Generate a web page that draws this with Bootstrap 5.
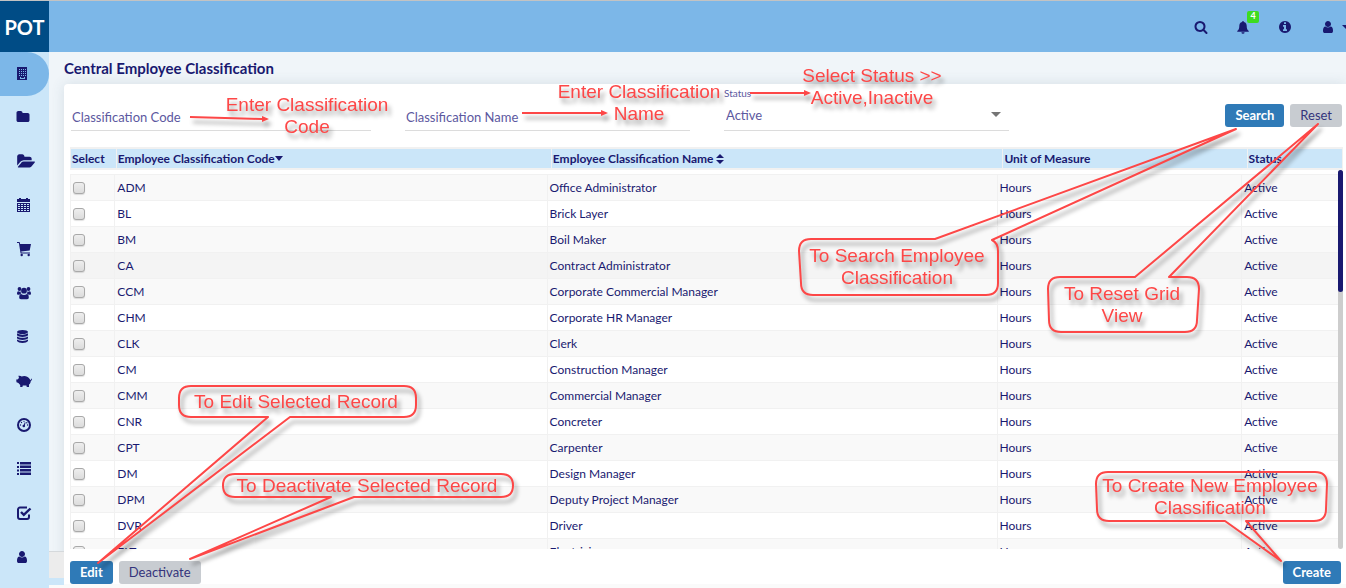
<!DOCTYPE html>
<html lang="en">
<head>
<meta charset="utf-8">
<meta name="viewport" content="width=device-width, initial-scale=1">
<title>Central Employee Classification</title>
<link href="https://cdn.jsdelivr.net/npm/bootstrap@5.3.0/dist/css/bootstrap.min.css" rel="stylesheet">
<style>
  :root { --ink: #191970; --sky: #7cb7e8; --pale: #cbe6f9; --grid: #f1f1f1; --note: #fd4747; }
  body { font-family: Lato, "Liberation Sans", sans-serif; font-size: 12px; line-height: 16px; color: var(--ink); background: #f0f5f9; }
  .app { height: 100vh; }
  .topbar { background: var(--sky); border-top: 1px solid #c3c3c3; height: 52px; }
  .brand { width: 49px; background: #004c86; color: #fff; font-size: 20px; font-weight: 700; }
  .tools { gap: 29px; }
  .tools a, .rail a { color: var(--ink); }
  .tools svg, .rail svg { display: block; fill: currentColor; }
  .tools .caret { margin-left: 7px; }
  .alerts { top: -9px; left: 10px; width: 12px; height: 12px; line-height: 10px; font-size: 9px; font-weight: 700; background: #3ddc20; color: #fff; border-radius: 2px; }
  .rail { width: 49px; background: var(--pale); }
  .rail a { height: 44px; padding: 0 0 2px 16px; }
  .rail a.active { background: var(--sky); border-radius: 0 22px 22px 0; padding-bottom: 0; }
  .page-foot { width: 15px; height: 37px; border-top: 1px solid #d5d9dc; background: linear-gradient(#ececec 26px, var(--pale) 26px 33px, #fafafa 33px); }
  .page-title { font-size: 15px; line-height: 32px; font-weight: 700; padding-left: 15px; }
  .panel { background: #fff; border-radius: 4px 0 0 0; box-shadow: 0 0 14px rgba(60, 90, 110, .14); padding: 3px 3px 0 6px; margin-left: 15px; }
  .base-strip { height: 4px; background: #fafafa; margin-left: 15px; }
  .filters { display: grid; grid-template-columns: 300fr 285fr 285fr 299fr; column-gap: 34px; padding: 0 1px; }
  .filters .form-control, .filters .form-select { border: 0; border-bottom: 1px solid #dcdcdc; border-radius: 0; padding: 0 1px; height: 27px; font-size: 13px; color: #5c58a0; background-color: transparent; box-shadow: none; }
  .filters .form-control::placeholder { color: #5c58a0; opacity: 1; }
  .filters .form-select { height: 32px; padding: 2px 24px 0 2px; background-image: url("data:image/svg+xml,%3Csvg xmlns='http://www.w3.org/2000/svg' viewBox='0 0 10 5'%3E%3Cpath fill='%23757575' d='M0 0h10L5 5z'/%3E%3C/svg%3E"); background-size: 10px 5px; background-position: right 8px center; }
  .filters label { font-size: 10px; line-height: 12px; color: #5c58a0; }
  .btn { font-size: 13px; line-height: 23px; padding: 0 10px; border: 0; border-radius: 3px; }
  .btn-primary { background: #2f7ab7; font-weight: 700; }
  .btn-secondary, .btn-secondary:hover { background: #c8ccd1; color: #34347c; }
  .actions { column-gap: 6px; padding-right: 2px; }
  .grid { table-layout: fixed; width: 100%; margin: 0; }
  .grid th { background: var(--pale); height: 21px; line-height: 15px; padding: 0 1px; border: solid var(--grid); border-width: 2px 1px; font-weight: 700; white-space: nowrap; }
  .grid td { height: 26px; padding: 0 2px; border: solid var(--grid); border-width: 1px 0 0 1px; white-space: nowrap; }
  .grid tbody tr:nth-child(odd) { background: #f9f9f9; }
  .grid tbody tr.current { background: #f4f4f4; }
  .grid svg { fill: var(--ink); vertical-align: -1px; }
  .rows { padding-top: 4px; }
  .grid .form-check-input { display: block; width: 12px; height: 12px; margin: 0; border: 1px solid #a9a9a9; border-radius: 3px; background-color: #dedede; background-image: linear-gradient(#eee, #dcdcdc); box-shadow: 0 1px 1px rgba(0, 0, 0, .12); }
  .track { width: 5px; background: #cdcdcd; border-radius: 3px; }
  .thumb { height: 122px; background: var(--ink); border-radius: 3px; }
  .note { position: absolute; pointer-events: none; z-index: 5; overflow: visible; filter: drop-shadow(3px 5px 2px rgba(0, 0, 0, .38)); font: 19px "Liberation Sans", Arial, sans-serif; }
  .note text { fill: var(--note); text-anchor: middle; }
  .note path { fill: none; stroke: var(--note); stroke-width: 2; stroke-linejoin: round; }
  .note .tip { fill: var(--note); stroke: none; }
</style>
</head>
<body>
<div class="app d-flex flex-column overflow-hidden">
  <header class="topbar d-flex flex-shrink-0">
    <div class="brand d-flex align-items-center justify-content-center">POT</div>
    <nav class="tools d-flex align-items-center ms-auto" aria-label="Account">
      <a href="#" aria-label="Search"><svg width="14" height="14" viewBox="0 0 1792 1792"><path d="M1216 832q0-185-131.500-316.500t-316.500-131.500-316.500 131.500-131.500 316.500 131.500 316.500 316.500 131.500 316.500-131.500 131.500-316.500zm512 832q0 52-38 90t-90 38q-54 0-90-38l-343-342q-179 124-399 124-143 0-273.500-55.500t-225-150-150-225-55.500-273.500 55.500-273.500 150-225 225-150 273.500-55.500 273.500 55.500 225 150 150 225 55.500 273.500q0 220-124 399l343 343q37 37 37 90z"/></svg></a>
      <a href="#" class="position-relative" aria-label="Alerts"><svg width="12" height="14" viewBox="0 0 12 14"><path d="M6 1c.6 0 .9.300.9.900C9 2.400 9.700 4 9.700 6c0 2.700.8 4 2.100 5 .3.400 0 .8-.4.800H.6c-.4 0-.7-.4-.4-.8C1.500 10 2.300 8.700 2.300 6c0-2 .7-3.600 2.800-4.100C5.100 1.300 5.400 1 6 1zM4.400 12.200h3.200a1.600 1.600 0 0 1-3.200 0z"/></svg><span class="alerts position-absolute text-center">4</span></a>
      <a href="#" aria-label="Information"><svg width="14" height="14" viewBox="0 0 1792 1792"><path d="M1152 1376v-160q0-14-9-23t-23-9h-96v-512q0-14-9-23t-23-9h-320q-14 0-23 9t-9 23v160q0 14 9 23t23 9h96v320h-96q-14 0-23 9t-9 23v160q0 14 9 23t23 9h448q14 0 23-9t9-23zm-128-896v-160q0-14-9-23t-23-9h-192q-14 0-23 9t-9 23v160q0 14 9 23t23 9h192q14 0 23-9t9-23zm640 416q0 209-103 385.500t-279.500 279.500-385.500 103-385.500-103-279.500-279.500-103-385.500 103-385.500 279.500-279.500 385.500-103 385.500 103 279.500 279.500 103 385.500z"/></svg></a>
      <a href="#" class="d-flex align-items-center" aria-label="Profile"><svg width="14" height="14" viewBox="0 0 1792 1792"><path d="M1536 1399q0 109-62.500 187t-150.500 78h-854q-88 0-150.500-78t-62.500-187q0-85 8.500-160.500t31.500-152 58.500-131 94-89 134.500-34.500q131 128 313 128t313-128q76 0 134.500 34.500t94 89 58.500 131 31.500 152 8.500 160.500zm-256-887q0 159-112.500 271.500t-271.500 112.500-271.500-112.500-112.500-271.500 112.500-271.500 271.500-112.500 271.500 112.500 112.500 271.500z"/></svg><svg class="caret" width="4" height="4" viewBox="0 0 4 4"><path d="M0 0h4v4z"/></svg></a>
    </nav>
  </header>

  <div class="d-flex flex-grow-1" style="min-height:0">
    <nav class="rail flex-shrink-0 nav flex-column flex-nowrap overflow-hidden" aria-label="Main">
      <a href="#" class="active d-flex align-items-center" aria-label="Company"><svg width="16" height="16" viewBox="0 0 16 16"><path fill-rule="evenodd" d="M1 1h10v13H1zM3 3v1h1V3zm2 0v1h1V3zm2 0v1h1V3zm2 0v1h1V3zM3 5v1h1V5zm2 0v1h1V5zm2 0v1h1V5zm2 0v1h1V5zM3 7v1h1V7zm2 0v1h1V7zm2 0v1h1V7zm2 0v1h1V7zM3 9v1h1V9zm2 0v1h1V9zm2 0v1h1V9zm2 0v1h1V9zM4 11h1v1h3v-1h1v2H4z"/></svg></a>
      <a href="#" class="d-flex align-items-center" aria-label="Projects"><svg width="14" height="14" viewBox="0 0 1792 1792"><path d="M1728 608v704q0 92-66 158t-158 66h-1216q-92 0-158-66t-66-158v-960q0-92 66-158t158-66h320q92 0 158 66t66 158v32h672q92 0 158 66t66 158z"/></svg></a>
      <a href="#" class="d-flex align-items-center" aria-label="Documents"><svg width="19" height="17" viewBox="-60 0 2016 1792"><path d="M1943 952q0 31-31 66l-336 396q-43 51-120.500 86.500t-143.500 35.500h-1088q-34 0-60.500-13t-26.500-43q0-31 31-66l336-396q43-51 120.500-86.500t143.500-35.500h1088q34 0 60.500 13t26.500 43zm-343-344v160h-832q-94 0-197 47.500t-164 119.500l-337 396-5 6q0-4-.5-12.500t-.5-12.500v-960q0-92 66-158t158-66h320q92 0 158 66t66 158v32h544q92 0 158 66t66 158z"/></svg></a>
      <a href="#" class="d-flex align-items-center" aria-label="Calendar"><svg width="16" height="16" viewBox="0 0 16 16"><path fill-rule="evenodd" d="M3 1h2v1h5V1h2v1h2v3H1V2h2zM1 6h13v9H1zM2 7v1h2V7zm3 0v1h2V7zm3 0v1h2V7zm3 0v1h2V7zM2 9v1h2V9zm3 0v1h2V9zm3 0v1h2V9zm3 0v1h2V9zM2 11v1h2v-1zm3 0v1h2v-1zm3 0v1h2v-1zm3 0v1h2v-1zM2 13v1h2v-1zm3 0v1h2v-1zm3 0v1h2v-1zm3 0v1h2v-1z"/></svg></a>
      <a href="#" class="d-flex align-items-center" aria-label="Purchasing"><svg width="16" height="16" viewBox="0 0 16 16"><path d="M1 1h2.600l.5 2H15l-1.300 6.500-8.500.9.300 1.100H14v1H4.600L2.900 2H1z"/><circle cx="5.700" cy="14" r="1.200"/><circle cx="12.700" cy="14" r="1.200"/></svg></a>
      <a href="#" class="d-flex align-items-center" aria-label="Employees"><svg width="16" height="16" viewBox="0 0 16 16"><circle cx="3.500" cy="4" r="1.900"/><circle cx="12.500" cy="4" r="1.900"/><circle cx="8" cy="5.700" r="2.900"/><path d="M1 9c0-1.600.4-2.800 1.300-2.800.6.400 1.400.6 2.300.3 0 1 .2 1.600.8 2.300-1 0-1.500.3-2 .9C2 9.700 1 9.800 1 9zM15 9c0-1.600-.4-2.800-1.300-2.800-.6.400-1.400.6-2.300.3 0 1-.2 1.600-.8 2.300 1 0 1.500.3 2 .9 1.400 0 2.400.1 2.400-.7zM3.200 12.500c0-2 .5-3.600 1.900-3.600 1.800 1.400 4 1.400 5.800 0 1.400 0 1.900 1.600 1.900 3.600 0 1-.7 1.700-1.700 1.700H4.900c-1 0-1.700-.7-1.700-1.700z"/></svg></a>
      <a href="#" class="d-flex align-items-center" aria-label="Data"><svg width="16" height="16" viewBox="0 0 16 16"><ellipse cx="6.500" cy="3" rx="5.500" ry="2"/><path d="M1 4.300c2 1.800 9 1.800 11 0v1.900C10.500 8.500 2.500 8.500 1 6.200zM1 7.500c2 1.800 9 1.800 11 0v1.700c-1.500 2.300-9.500 2.300-11 0zM1 10.600c2 1.800 9 1.800 11 0V12c-1.500 2.500-9.500 2.500-11 0z"/></svg></a>
      <a href="#" class="d-flex align-items-center" aria-label="Finance"><svg width="17" height="16" viewBox="0 0 17 16"><path d="M.2 6.500h1.300L3 5 2.400 2.800C4 2.500 5 3 5.600 3.600 8 2.400 11.800 3 13.300 5.600c.6.900.9 1.300 1.300 1.300.5 0 .6-.4.4-1l.6-.3c.6 1 .4 2-.8 2.200 0 2-.8 3-1.800 3.800v2.300h-2.200l-.4-1.300H6.800l-.4 1.300H4.200v-2L2.400 10l-1.900-.7z"/></svg></a>
      <a href="#" class="d-flex align-items-center" aria-label="Dashboard"><svg width="16" height="16" viewBox="0 0 16 16"><circle cx="8" cy="8" r="6" fill="none" stroke="currentColor" stroke-width="2"/><circle cx="7.800" cy="9" r="1.300"/><path d="M7.500 8.500l1.300-3.300.8.300-1 3.400z"/><circle cx="4.500" cy="8" r=".7"/><circle cx="5.500" cy="5.500" r=".7"/><circle cx="8" cy="4.300" r=".6"/><circle cx="10.800" cy="5.700" r=".7"/><circle cx="11.600" cy="8" r=".7"/></svg></a>
      <a href="#" class="d-flex align-items-center" aria-label="Lists"><svg width="16" height="16" viewBox="0 0 16 16"><path d="M1 1h2v2H1zm3 0h11v2.500H4zM1 5h2v2H1zm3-.5h11V7H4zM1 8.500h2v2H1zM4 8h11v2.500H4zm-3 4h2v2H1zm3-.5h11V14H4z"/></svg></a>
      <a href="#" class="d-flex align-items-center" aria-label="Tasks"><svg width="16" height="16" viewBox="0 0 16 16"><path d="M11 2.500H4a2 2 0 0 0-2 2V12a2 2 0 0 0 2 2h7a2 2 0 0 0 2-2V9.500" fill="none" stroke="currentColor" stroke-width="2"/><path d="M5 7l2.800 2.800L14.500 3.500" fill="none" stroke="currentColor" stroke-width="2.400"/></svg></a>
      <a href="#" class="d-flex align-items-center" aria-label="Users"><svg width="14" height="14" viewBox="128 0 1792 1792"><path d="M1536 1399q0 109-62.500 187t-150.500 78h-854q-88 0-150.500-78t-62.500-187q0-85 8.500-160.500t31.500-152 58.500-131 94-89 134.500-34.500q131 128 313 128t313-128q76 0 134.500 34.500t94 89 58.500 131 31.500 152 8.500 160.500zm-256-887q0 159-112.500 271.500t-271.500 112.500-271.500-112.500-112.500-271.500 112.500-271.500 271.500-112.500 271.500 112.500 112.500 271.500z"/></svg></a>
    </nav>

    <main class="d-flex flex-column flex-grow-1 position-relative" style="min-width:0">
      <div class="page-foot position-absolute bottom-0 start-0"></div>
      <h1 class="page-title mb-0">Central Employee Classification</h1>
      <section class="panel d-flex flex-column flex-grow-1" style="min-height:0">
        <form class="filters align-items-end mb-3">
          <div class="position-relative">
            <input class="form-control" id="code" type="text" placeholder="Classification Code" aria-label="Classification Code">
            <svg class="note top-0 start-0" width="320" height="50" viewBox="71 104 320 50"><path d="M190 117l72 2"/><path class="tip" d="M262 116l7 3-7 3z"/><text x="307" y="111">Enter Classification</text><text x="307" y="133">Code</text></svg>
          </div>
          <div class="position-relative">
            <input class="form-control" id="name" type="text" placeholder="Classification Name" aria-label="Classification Name">
            <svg class="note top-0 start-0" width="320" height="50" viewBox="405 104 320 50"><path d="M522 113h80"/><path class="tip" d="M601 110l7 3-7 3z"/><text x="639" y="98">Enter Classification</text><text x="639" y="120">Name</text></svg>
          </div>
          <div class="position-relative">
            <label class="d-block" for="status">Status</label>
            <select class="form-select" id="status"><option>Active</option><option>Inactive</option></select>
            <svg class="note top-0 start-0" width="240" height="50" viewBox="724 87 240 50"><path d="M750 93h55"/><path class="tip" d="M804 90l7 3-7 3z"/><text x="872" y="82">Select Status &gt;&gt;</text><text x="872" y="104">Active,Inactive</text></svg>
          </div>
          <div class="actions d-flex justify-content-end position-relative pb-1 pe-0">
            <button type="button" class="btn btn-primary">Search</button>
            <button type="reset" class="btn btn-secondary">Reset</button>
            <svg class="note top-0 end-0" width="546" height="240" viewBox="796 104 546 240"><path d="M811 239H935L1236 129 992 240Q998 243 998 251V283Q998 295 986 295H813Q801 295 801 283L799 251Q799 239 811 239z"/><text x="897" y="262">To Search Employee</text><text x="897" y="284">Classification</text><path d="M1060 277H1135L1318 124 1169 277H1187Q1199 277 1199 289L1197 320Q1197 332 1185 332H1061Q1049 332 1049 320L1048 289Q1048 277 1060 277z"/><text x="1122" y="300">To Reset Grid</text><text x="1122" y="322">View</text></svg>
          </div>
        </form>

        <table class="grid">
          <colgroup><col style="width:3.600%"><col style="width:34.200%"><col style="width:35.500%"><col style="width:19.200%"><col style="width:7.500%"></colgroup>
          <thead><tr>
            <th scope="col">Select</th>
            <th scope="col">Employee Classification Code<svg width="8" height="9" viewBox="0 0 8 9"><path d="M0 1h8L4 6z"/></svg></th>
            <th scope="col">Employee Classification Name <svg width="8" height="10" viewBox="0 0 8 10"><path d="M0 4h8L4 0zM0 6h8l-4 4z"/></svg></th>
            <th scope="col">Unit of Measure</th>
            <th scope="col">Status</th>
          </tr></thead>
        </table>
        <div class="d-flex flex-grow-1 overflow-hidden" style="flex-basis:0">
          <div class="rows flex-grow-1 overflow-hidden">
            <table class="grid">
              <colgroup><col style="width:3.500%"><col style="width:34.100%"><col style="width:35.500%"><col style="width:19.300%"><col style="width:7.600%"></colgroup>
              <tbody id="records"></tbody>
            </table>
          </div>
          <div class="track flex-shrink-0"><div class="thumb"></div></div>
        </div>
        <div class="actions d-flex position-relative flex-shrink-0 mt-2 pt-1">
          <button type="button" class="btn btn-primary">Edit</button>
          <button type="button" class="btn btn-secondary">Deactivate</button>
          <button type="button" class="btn btn-primary ms-auto">Create</button>
          <svg class="note bottom-0 start-0" width="450" height="204" viewBox="70 380 450 204"><path d="M191 386H404Q416 386 416 398V405Q416 417 404 417H290L98 563 268 417H191Q179 417 179 405V398Q179 386 191 386z"/><text x="296" y="408">To Edit Selected Record</text><path d="M235 474H501Q513 474 513 485.500T501 497H354L190 559 331 497H235Q223 497 223 485.500T235 474z"/><text x="367" y="492">To Deactivate Selected Record</text></svg>
          <svg class="note bottom-0 end-0" width="253" height="120" viewBox="1090 464 253 120"><path d="M1108 472H1315Q1327 472 1327 484L1326 509Q1326 521 1314 521H1246L1281 561 1225 521H1109Q1097 521 1097 509L1096 484Q1096 472 1108 472z"/><text x="1210" y="492">To Create New Employee</text><text x="1210" y="514">Classification</text></svg>
        </div>
      </section>
      <div class="base-strip flex-shrink-0"></div>
    </main>
  </div>
</div>
<script src="https://cdn.jsdelivr.net/npm/bootstrap@5.3.0/dist/js/bootstrap.bundle.min.js"></script>
<script>
  const records = [
    ["ADM", "Office Administrator"], ["BL", "Brick Layer"], ["BM", "Boil Maker"], ["CA", "Contract Administrator"],
    ["CCM", "Corporate Commercial Manager"], ["CHM", "Corporate HR Manager"], ["CLK", "Clerk"], ["CM", "Construction Manager"],
    ["CMM", "Commercial Manager"], ["CNR", "Concreter"], ["CPT", "Carpenter"], ["DM", "Design Manager"],
    ["DPM", "Deputy Project Manager"], ["DVR", "Driver"], ["ELT", "Electrician"]
  ];
  document.getElementById("records").innerHTML = records.map(([code, name]) =>
    `<tr${code === "CA" ? ' class="current"' : ""}><td><input class="form-check-input" type="checkbox" aria-label="Select ${code}"></td>` +
    `<td>${code}</td><td>${name}</td><td>Hours</td><td>Active</td></tr>`).join("");
</script>
</body>
</html>
